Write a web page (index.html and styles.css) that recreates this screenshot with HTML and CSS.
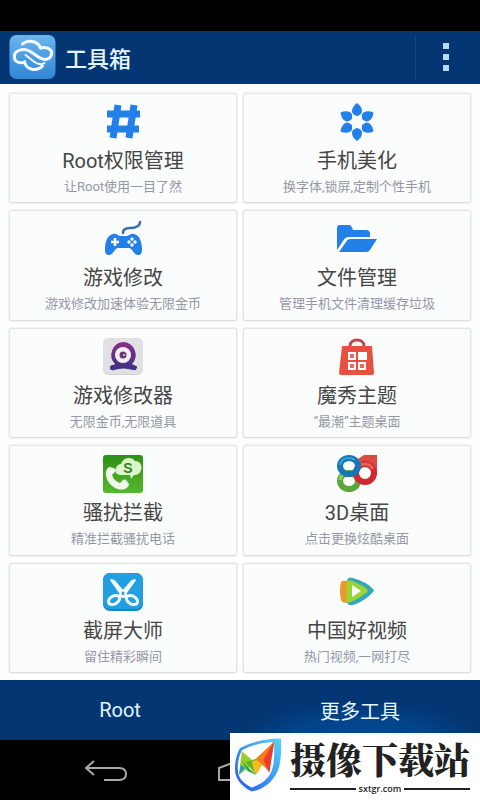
FILE: index.html
```html
<!DOCTYPE html>
<html lang="zh-CN">
<head>
  <meta charset="UTF-8">
  <meta name="viewport" content="width=device-width, initial-scale=1.0">
  <title>工具箱</title>
  <link rel="stylesheet" href="styles.css">
</head>
<body>

<div class="statusbar"></div>

<header class="header">
  <svg class="logo" viewBox="0 0 46 44" aria-hidden="true">
    <defs>
      <linearGradient id="sky" x1="0" y1="0" x2="0" y2="1">
        <stop offset="0" stop-color="#6bb4ee"/>
        <stop offset="1" stop-color="#2f86d6"/>
      </linearGradient>
    </defs>
    <rect width="46" height="44" rx="7" fill="url(#sky)"/>
    <g fill="none" stroke="#f4fcff" stroke-linecap="round">
      <path d="M13 9C18 5 28 5 31 13C38 11 43 15 42 19C41 25 34 26 29 22L20 16C14 13 5 15 5 21C4 27 11 29 15 27C17 35 27 37 33 31" stroke-width="3"/>
      <path d="M16 20L25 27C28 29 32 30 35 28" stroke-width="2"/>
    </g>
  </svg>
  <h1>工具箱</h1>
  <button class="menu" type="button" aria-label="菜单">
    <span></span><span></span><span></span>
  </button>
</header>

<main class="tools">

  <a class="card" href="#">
    <svg class="icon" viewBox="0 0 44 40" aria-hidden="true">
      <path d="M17 2L12 35M33 2L28 35" stroke="#2380e8" stroke-width="7"/>
      <path d="M6 11H39M6 26H38" stroke="#2380e8" stroke-width="7"/>
    </svg>
    <h2>Root权限管理</h2>
    <p>让Root使用一目了然</p>
  </a>

  <a class="card" href="#">
    <svg class="icon" viewBox="0 0 44 40" fill="#2380e8" aria-hidden="true">
      <defs><path id="petal" d="M22 0C25 2 27 5 27 8C27 11 25 12 22 13C19 12 17 11 17 8C17 5 19 2 22 0Z"/></defs>
      <use href="#petal"/>
      <use href="#petal" transform="rotate(60 22 19)"/>
      <use href="#petal" transform="rotate(120 22 19)"/>
      <use href="#petal" transform="rotate(180 22 19)"/>
      <use href="#petal" transform="rotate(240 22 19)"/>
      <use href="#petal" transform="rotate(300 22 19)"/>
    </svg>
    <h2>手机美化</h2>
    <p>换字体,锁屏,定制个性手机</p>
  </a>

  <a class="card" href="#">
    <svg class="icon" viewBox="0 0 44 40" aria-hidden="true">
      <path d="M22 13C22 9 25 8 29 8S39 7 39 2" fill="none" stroke="#356fae" stroke-width="2.500" stroke-linecap="round"/>
      <path d="M12 14C15 13 17 16 19 16H26C28 16 30 13 33 14C39 15 41 23 41 29C41 33 40 35 37 35C33 35 31 28 28 28H17C14 28 12 35 8 35C5 35 4 33 4 29C4 23 6 15 12 14Z" fill="#2380e8"/>
      <path d="M14 18V26M10 22H18" stroke="#fff" stroke-width="2.600"/>
      <g fill="#fff"><circle cx="31" cy="19" r="1.700"/><circle cx="31" cy="25" r="1.700"/><circle cx="28" cy="22" r="1.700"/><circle cx="34" cy="22" r="1.700"/></g>
    </svg>
    <h2>游戏修改</h2>
    <p>游戏修改加速体验无限金币</p>
  </a>

  <a class="card" href="#">
    <svg class="icon" viewBox="0 0 44 40" fill="#2380e8" aria-hidden="true">
      <path d="M2 30V8C2 6 3 5 5 5H14C16 5 17 7 18 10H31C33 10 35 11 35 13V17H14C11 17 9 19 8 21Z"/>
      <path d="M4 32L11 22C12 20 13 19 16 19H42L35 30C34 31 33 32 31 32Z"/>
    </svg>
    <h2>文件管理</h2>
    <p>管理手机文件清理缓存垃圾</p>
  </a>

  <a class="card" href="#">
    <svg class="icon" viewBox="0 0 44 40" aria-hidden="true">
      <defs>
        <linearGradient id="cam" x1="0" y1="0" x2="0" y2="1">
          <stop offset="0" stop-color="#8b2d86"/>
          <stop offset="1" stop-color="#3b3384"/>
        </linearGradient>
      </defs>
      <rect x="2" y="0" width="40" height="37" rx="6" fill="#cfcfd5"/>
      <rect x="2" y="0" width="40" height="36" rx="6" fill="#e1e1e5"/>
      <path d="M22 4A13 13 0 0 1 31 26C33 28 37 27 36 30Q35 33 32 32Q22 29 13 32Q9 33 9 30C9 26 12 28 14 26A13 13 0 0 1 22 4Z" fill="url(#cam)"/>
      <circle cx="22" cy="17" r="8" fill="#f3eef7"/>
      <circle cx="22" cy="17" r="3.500" fill="#6d3274"/>
      <circle cx="23" cy="17" r="1" fill="#ddd"/>
    </svg>
    <h2>游戏修改器</h2>
    <p>无限金币,无限道具</p>
  </a>

  <a class="card" href="#">
    <svg class="icon" viewBox="0 0 44 40" aria-hidden="true">
      <path d="M15 11V8C15 0 29 0 29 8V11" fill="none" stroke="#bd4b48" stroke-width="3"/>
      <path d="M7 8H37L39 35Q39 37 37 37H6Q4 37 4 35Z" fill="#e8503f"/>
      <path d="M13 14H21V22H13ZM23 14H32V22H23ZM13 24H21V32H13ZM23 24H31V32H23Z" fill="#fff"/>
      <path d="M15 16H19V20H15ZM15 26H19V30H15ZM25 26H29V30H25Z" fill="#ec6a5b"/>
    </svg>
    <h2>魔秀主题</h2>
    <p>“最潮”主题桌面</p>
  </a>

  <a class="card" href="#">
    <svg class="icon" viewBox="0 0 44 40" aria-hidden="true">
      <defs>
        <linearGradient id="leaf" x1="0" y1="0" x2="0" y2="1">
          <stop offset="0" stop-color="#2f8f18"/>
          <stop offset="1" stop-color="#55b82c"/>
        </linearGradient>
      </defs>
      <rect x="2" y="0" width="40" height="38" rx="3" fill="url(#leaf)"/>
      <path d="M20 20C15 20 13 16 15 13C16 10 18 9 20 9C22 2 31 1 34 6C39 6 42 11 40 15C39 19 36 20 33 20L30 24L29 20Z" fill="#dcf5ca"/>
      <text x="27" y="18" text-anchor="middle" class="cloud-letter">S</text>
      <path d="M8 12L13 13Q15 14 14 17L11 20Q13 26 19 28L22 25Q24 24 25 25L28 29Q28 32 24 34C15 37 3 27 5 16Q6 13 8 12Z" fill="#effbe8"/>
    </svg>
    <h2>骚扰拦截</h2>
    <p>精准拦截骚扰电话</p>
  </a>

  <a class="card" href="#">
    <svg class="icon" viewBox="0 0 44 40" fill="none" aria-hidden="true">
      <path d="M23 4L29 0H42V21L37 12L28 10Z" fill="#d94a43"/>
      <ellipse cx="14" cy="26" rx="9" ry="8" stroke="#58a83a" stroke-width="6"/>
      <path d="M5 25C6 17 17 16 21 21" stroke="#92cf6e" stroke-width="3"/>
      <circle cx="30" cy="18" r="9" stroke="#cf2832" stroke-width="6"/>
      <path d="M22 14A9 9 0 0 1 38 14" stroke="#e66257" stroke-width="3"/>
      <ellipse cx="14" cy="11" rx="9" ry="8" stroke="#1676b8" stroke-width="6"/>
      <path d="M5 10C6 3 15 1 20 5" stroke="#3ba5d8" stroke-width="2"/>
    </svg>
    <h2>3D桌面</h2>
    <p>点击更换炫酷桌面</p>
  </a>

  <a class="card" href="#">
    <svg class="icon" viewBox="0 0 44 40" aria-hidden="true">
      <rect x="2" y="0" width="40" height="38" rx="7" fill="#1787c7"/>
      <rect x="2" y="0" width="40" height="36" rx="7" fill="#219fe0"/>
      <path d="M10 7L13 8L26 23L22 24ZM34 7L31 8L18 23L22 24Z" fill="#f2fcff" stroke="#f2fcff" stroke-width="2" stroke-linejoin="round"/>
      <ellipse cx="13" cy="27" rx="6" ry="4" transform="rotate(-30 13 27)" fill="none" stroke="#f2fcff" stroke-width="3"/>
      <ellipse cx="31" cy="27" rx="6" ry="4" transform="rotate(30 31 27)" fill="none" stroke="#f2fcff" stroke-width="3"/>
      <circle cx="22" cy="20" r="1.500" fill="#5995b3"/>
    </svg>
    <h2>截屏大师</h2>
    <p>留住精彩瞬间</p>
  </a>

  <a class="card" href="#">
    <svg class="icon" viewBox="0 0 44 40" aria-hidden="true">
      <path d="M6 9Q7 7 13 8V30Q7 30 6 27Q4 18 6 9Z" fill="#ed962c"/>
      <path d="M12 8Q13 3 18 5Q32 9 38 16Q40 18 37 20Q30 28 18 32Q12 33 12 28Z" fill="#36a6b8"/>
      <path d="M12 9Q13 6 17 8Q27 12 32 16Q34 18 31 20Q25 25 16 29Q11 30 11 27Z" fill="#9bd535"/>
      <path d="M17 12L26 18L17 24Z" fill="#fff"/>
    </svg>
    <h2>中国好视频</h2>
    <p>热门视频,一网打尽</p>
  </a>

</main>

<nav class="tabs">
  <a href="#">Root</a>
  <a href="#" class="active">更多工具</a>
</nav>

<footer class="navbar">
  <button type="button" aria-label="返回">
    <svg viewBox="0 0 44 24" class="nav-icon" aria-hidden="true">
      <path d="M10 2L2 9L10 16M2 9H35Q42 9 42 15T35 21H20"/>
    </svg>
  </button>
  <button type="button" aria-label="主页">
    <svg viewBox="0 0 44 24" class="nav-icon" aria-hidden="true">
      <path d="M22 1L1 9V21H43V9Z"/>
    </svg>
  </button>

  <div class="badge">
    <svg class="badge-logo" viewBox="0 0 50 56" aria-hidden="true">
      <defs>
        <linearGradient id="shield" x1="1" y1="0" x2="0" y2="1">
          <stop offset="0" stop-color="#55d4fa"/>
          <stop offset="1" stop-color="#2459e6"/>
        </linearGradient>
      </defs>
      <path d="M6 11Q24 1 48 1C48 18 49 31 39 43C32 51 24 54 18 55C5 48 1 40 1 32Q1 20 6 11ZM8 13Q3 23 4 33C4 41 9 46 18 51C27 48 33 44 37 37C42 27 41 17 41 5Q25 4 8 13Z" fill="url(#shield)" fill-rule="evenodd"/>
      <path d="M8 14L22 26L5 38Z" fill="#9ccc27"/>
      <path d="M7 28L22 38L18 36L11 31L5 38Z" fill="#209bd4"/>
      <path d="M8 24L22 38L14 34Z" fill="#27a343"/>
      <path d="M12 25L22 22L29 27L22 38Z" fill="#54b52d"/>
      <path d="M18 24L30 22L25 35L21 37Z" fill="#f4bc19"/>
      <path d="M22 22L41 4L36 35L26 25Z" fill="#f47b20"/>
      <path d="M41 4L36 36L30 23Z" fill="#e93d29"/>
    </svg>
    <div class="badge-text">
      <strong>摄像下载站</strong>
      <span>sxtgr.com</span>
    </div>
  </div>
</footer>

</body>
</html>
```
FILE: styles.css
```css
:root {
  --navy: #033673;
  --title: #464646;
  --muted: #9498a6;
}

* {
  box-sizing: border-box;
}

body {
  margin: 0;
  min-height: 100vh;
  display: flex;
  flex-direction: column;
  background: #fefefe;
  font-family: Roboto, "Noto Sans CJK SC", sans-serif;
}

h1, h2, p {
  margin: 0;
  font-weight: 400;
}

a {
  color: inherit;
  text-decoration: none;
}

button {
  border: none;
  padding: 0;
  background: none;
  cursor: pointer;
}

.statusbar {
  height: 31px;
  background: #000;
}

/* Header */
.header {
  display: flex;
  align-items: center;
  gap: 9px;
  height: 53px;
  padding-left: 9px;
  background: var(--navy);
  border-bottom: 1px solid #123a63;
  color: #e4f6ff;
}

.header h1 {
  font-size: 22px;
  font-weight: 500;
}

.logo {
  width: 47px;
  height: 44px;
}

.menu {
  display: flex;
  flex-direction: column;
  align-items: center;
  gap: 5px;
  width: 65px;
  padding: 8px 4px 8px 0;
  margin-left: auto;
  border-left: 1px solid #164682;
}

.menu span {
  width: 6px;
  height: 6px;
  background: #b9d9fa;
}

/* Tool cards */
.tools {
  flex: 1;
  display: grid;
  grid-template-columns: 1fr 1fr;
  grid-auto-rows: 1fr;
  gap: 7px 6px;
  padding: 9px 9px 7px;
}

.card {
  display: flex;
  flex-direction: column;
  align-items: center;
  gap: 2px;
  padding-top: 9px;
  background: #fbfcfc;
  border: 1px solid #e4e5e7;
  border-bottom-color: #dcdde0;
  border-radius: 3px;
  box-shadow: 0 0 1px 1px #f2f2f3;
}

.icon {
  width: 44px;
  height: 40px;
}

.card h2 {
  font-size: 20px;
  line-height: 32px;
  color: var(--title);
}

.card p {
  font-size: 13px;
  line-height: 16px;
  color: var(--muted);
}

.cloud-letter {
  font: bold 14px "Liberation Sans", sans-serif;
  fill: #34801f;
}

/* Bottom tabs */
.tabs {
  display: grid;
  grid-template-columns: 1fr 1fr;
  height: 60px;
  background: var(--navy);
  color: #e4f6ff;
  font-size: 20px;
}

.tabs a {
  display: flex;
  align-items: center;
  justify-content: center;
}

.tabs .active {
  background: radial-gradient(ellipse 120px 38px at 50% 100%, #024a94, #03438a 60%, transparent);
}

/* System navigation */
.navbar {
  position: relative;
  display: grid;
  grid-template-columns: repeat(3, 1fr);
  height: 60px;
  padding: 4px 39px 0;
  background: #000;
}

.nav-icon {
  width: 44px;
  height: 24px;
  fill: none;
  stroke: #a8a8a8;
  stroke-width: 2;
}

/* Site badge over the navigation bar */
.badge {
  position: absolute;
  right: 0;
  bottom: 0;
  display: flex;
  align-items: flex-start;
  gap: 7px;
  width: 250px;
  height: 67px;
  padding: 4px 11px 0 4px;
  background: #fff;
  color: #222;
}

.badge-logo {
  flex: none;
  width: 49px;
  height: 56px;
}

.badge-text {
  flex: 1;
}

.badge strong {
  display: block;
  font-family: "Noto Serif CJK SC", "Noto Sans CJK SC", serif;
  font-size: 36px;
  font-weight: 900;
  line-height: 44px;
  white-space: nowrap;
}

.badge span {
  display: flex;
  align-items: center;
  gap: 3px;
  font-family: "Open Sans", sans-serif;
  font-size: 9px;
  font-weight: 600;
  line-height: 16px;
}

.badge span::before,
.badge span::after {
  content: "";
  flex: 1;
  height: 2px;
  background: #222;
}
```
